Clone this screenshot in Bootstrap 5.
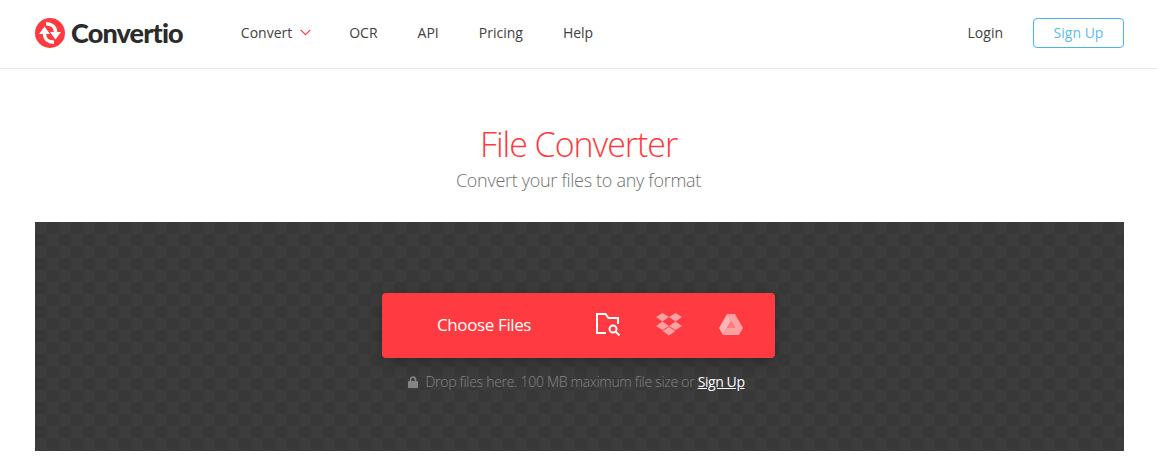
<!DOCTYPE html>
<html lang="en">
<head>
  <meta charset="UTF-8" />
  <meta name="viewport" content="width=device-width, initial-scale=1.0" />
  <title>File Converter</title>
  <link href="https://cdn.jsdelivr.net/npm/bootstrap@5.3.0/dist/css/bootstrap.min.css" rel="stylesheet" />
  <style>
    body {
      font-family: "Open Sans", sans-serif;
      color: #404040;
      background: #fff;
    }

    .top-bar {
      height: 69px;
      padding: 0 33px 2px 35px;
      border-bottom: 1px solid #e8e8e8;
    }

    .brand-link {
      color: #2b2b2b;
      font-family: Lato, sans-serif;
      font-weight: 900;
      font-size: 27px;
      letter-spacing: -0.85px;
      text-decoration: none;
      gap: 6px;
      margin-right: 58px;
    }

    .menu-link {
      color: #404040;
      font-size: 14px;
      text-decoration: none;
      margin-right: 40px;
      padding-bottom: 2px;
    }

    .menu-first {
      margin-right: 38px;
    }

    .signup-btn {
      width: 91px;
      height: 30px;
      margin-left: 30px;
      padding: 0;
      font-size: 14px;
      line-height: 27px;
      color: #5bbce8;
      border: 1px solid #4db5e6;
      border-radius: 4px;
    }

    .hero-title {
      margin: 55px 0 0;
      color: #ff3a40;
      font-size: 34px;
      font-weight: 300;
      line-height: 40px;
      letter-spacing: -1.05px;
    }

    .hero-sub {
      margin: 4px 0 0;
      color: #6f6f6f;
      font-size: 18px;
      font-weight: 300;
      line-height: 25px;
      letter-spacing: -0.3px;
    }

    .drop-zone {
      height: 229px;
      margin: 29px 33px 20px 35px;
      padding: 71px 2px 0 0;
      background-color: #383838;
      background-image: conic-gradient(#383838 25%, #3c3c3c 0 50%, #383838 0 75%, #3c3c3c 0);
      background-size: 24px 24px;
    }

    .choose-box {
      width: 393px;
      height: 65px;
      background: #ff3a40;
      border-radius: 4px;
      box-shadow: 0 4px 14px rgba(0, 0, 0, 0.25);
      padding: 0 32px 2px 55px;
    }

    .choose-label {
      color: #fff;
      font-size: 17px;
      font-weight: 500;
      letter-spacing: -0.38px;
      width: 94px;
      margin-right: 65px;
      white-space: nowrap;
    }

    .folder-icon {
      margin-right: 35px;
    }

    .note-row {
      margin-top: 14px;
      padding-right: 4px;
      color: #858585;
      font-size: 14px;
      line-height: 20px;
      font-weight: 300;
      letter-spacing: -0.29px;
      gap: 7px;
    }

    .note-row a {
      color: #fff;
      font-weight: 400;
      letter-spacing: -0.42px;
    }
  </style>
</head>
<body>

  <header class="top-bar d-flex align-items-center">
    <a class="brand-link d-flex align-items-center" href="#">
      <svg width="30" height="30" viewBox="0 0 30 30" aria-hidden="true">
        <circle cx="15" cy="15" r="15" fill="#ff3a40" />
        <path d="M9.500 16C9.500 21 13 24.200 19 24.200M20.500 14C20.500 9 17 5.800 11 5.800" fill="none" stroke="#fff" stroke-width="3.400" />
        <path d="M9.500 8.500 15 16H4ZM20.500 21.500 15 14H26Z" fill="#fff" />
      </svg>
      <span>Convertio</span>
    </a>
    <a class="menu-link menu-first d-flex align-items-center gap-2" href="#">Convert
      <svg width="11" height="7" viewBox="0 0 11 7" aria-hidden="true"><path d="M.7.8 5.500 5.600 10.300.8" fill="none" stroke="#ff3a40" stroke-width="1.200" /></svg>
    </a>
    <a class="menu-link" href="#">OCR</a>
    <a class="menu-link" href="#">API</a>
    <a class="menu-link" href="#">Pricing</a>
    <a class="menu-link" href="#">Help</a>
    <a class="menu-link ms-auto m-0" href="#">Login</a>
    <a class="btn signup-btn" href="#">Sign Up</a>
  </header>

  <main>
    <div class="text-center">
      <h1 class="hero-title">File Converter</h1>
      <p class="hero-sub">Convert your files to any format</p>
    </div>

    <section class="drop-zone">
      <div class="choose-box d-flex align-items-center mx-auto">
        <span class="choose-label">Choose Files</span>
        <svg class="folder-icon" width="25" height="23" viewBox="0 0 25 23" aria-hidden="true">
          <path d="M10 20H1V1h8.500l3 4H22v6" fill="none" stroke="#fff" stroke-width="2" />
          <circle cx="17" cy="16" r="3.500" fill="none" stroke="#fff" stroke-width="2" />
          <path d="m19.500 18.500 4 4" stroke="#fff" stroke-width="2" />
        </svg>
        <svg width="26" height="23" viewBox="0 0 26 23" aria-hidden="true" fill="#ffa0a3">
          <path d="M6.500 0 13 4 6.500 8.500 0 4Z M19.500 0 26 4 19.500 8.500 13 4Z M6.500 8.500 13 13 6.500 17 0 13Z M19.500 8.500 26 13 19.500 17 13 13Z M6.500 18 13 14 19.500 18 13 22.500Z" />
        </svg>
        <svg class="ms-auto" width="24" height="21" viewBox="0 0 24 21" aria-hidden="true">
          <path d="M8 0h8l8 14h-8L12 7Z" fill="#ffa0a3" />
          <path d="M8 0 12 7 4 21 0 14Z" fill="#ffb4b6" />
          <path d="M8 14H24L20 21H4Z" fill="#ffa0a3" />
          <path d="M12 7 16 14H8Z" fill="#ff7b80" />
        </svg>
      </div>
      <div class="note-row d-flex justify-content-center align-items-center">
        <svg width="10" height="12" viewBox="0 0 10 12" aria-hidden="true">
          <path d="M2.500 5V3.500a2.500 2.500 0 0 1 5 0V5" fill="none" stroke="#858585" stroke-width="1.500" />
          <rect y="5" width="10" height="7" rx="1" fill="#858585" />
        </svg>
        <span>Drop files here. 100 MB maximum file size or <a href="#">Sign Up</a></span>
      </div>
    </section>
  </main>

  <script src="https://cdn.jsdelivr.net/npm/bootstrap@5.3.0/dist/js/bootstrap.bundle.min.js"></script>
</body>
</html>
